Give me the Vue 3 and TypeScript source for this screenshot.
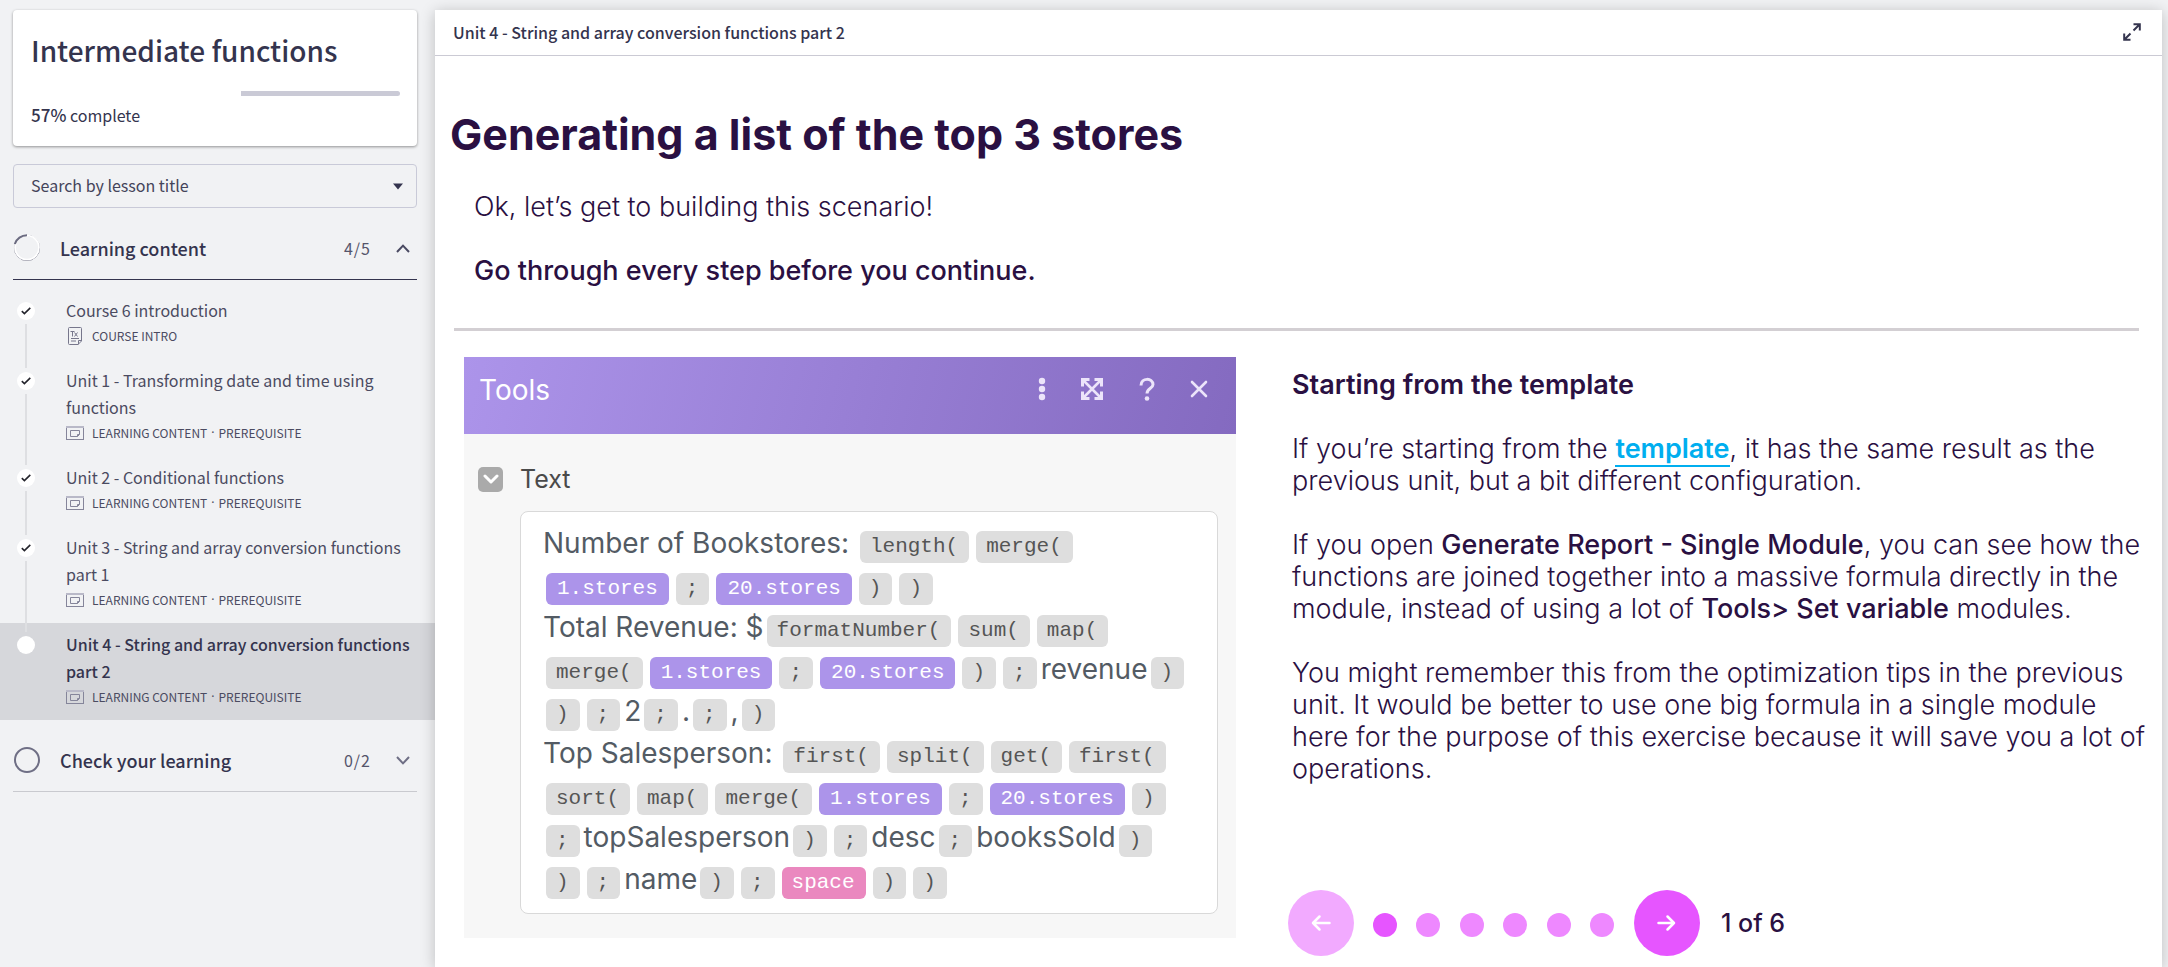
<script setup lang="ts">
import { ref } from 'vue'

interface Lesson {
  title: string
  tags: string[]
  icon: 'page' | 'window'
  done: boolean
  current?: boolean
}

type Kind = 'text' | 'fn' | 'var' | 'kw'
interface Token {
  kind: Kind
  value: string
}

const unitTags = ['LEARNING CONTENT', 'PREREQUISITE']
const lessons: Lesson[] = [
  { title: 'Course 6 introduction', tags: ['COURSE INTRO'], icon: 'page', done: true },
  { title: 'Unit 1 - Transforming date and time using functions', tags: unitTags, icon: 'window', done: true },
  { title: 'Unit 2 - Conditional functions', tags: unitTags, icon: 'window', done: true },
  { title: 'Unit 3 - String and array conversion functions part 1', tags: unitTags, icon: 'window', done: true },
  { title: 'Unit 4 - String and array conversion functions part 2', tags: unitTags, icon: 'window', done: false, current: true },
]

const t = (value: string): Token => ({ kind: 'text', value })
const f = (value: string): Token => ({ kind: 'fn', value })
const v = (value: string): Token => ({ kind: 'var', value })

const formula: Token[][] = [
  [t('Number of Bookstores: '), f('length('), f('merge(')],
  [v('1.stores'), f(';'), v('20.stores'), f(')'), f(')')],
  [t('Total Revenue: $'), f('formatNumber('), f('sum('), f('map(')],
  [f('merge('), v('1.stores'), f(';'), v('20.stores'), f(')'), f(';'), t('revenue'), f(')')],
  [f(')'), f(';'), t('2'), f(';'), t('.'), f(';'), t(','), f(')')],
  [t('Top Salesperson: '), f('first('), f('split('), f('get('), f('first(')],
  [f('sort('), f('map('), f('merge('), v('1.stores'), f(';'), v('20.stores'), f(')')],
  [f(';'), t('topSalesperson'), f(')'), f(';'), t('desc'), f(';'), t('booksSold'), f(')')],
  [f(')'), f(';'), t('name'), f(')'), f(';'), { kind: 'kw', value: 'space' }, f(')'), f(')')],
]

const steps = 6
const step = ref(1)
const percent = 57
</script>

<template>
  <div class="shell">
    <aside class="sidebar">
      <section class="card">
        <h2 class="course">Intermediate functions</h2>
        <div class="track" role="progressbar" aria-label="Course progress" :aria-valuenow="percent" aria-valuemin="0" aria-valuemax="100">
          <div class="done" :style="{ width: percent + '%' }"></div>
          <div class="rest"></div>
        </div>
        <p class="percent"><strong>{{ percent }}%</strong> complete</p>
      </section>

      <div class="search">
        <select class="select" aria-label="Search by lesson title">
          <option>Search by lesson title</option>
        </select>
        <svg class="caret" width="10" height="7" viewBox="0 0 10 7" aria-hidden="true"><path d="M0 0.5h10L5 6.5z" fill="#34344e" /></svg>
      </div>

      <button type="button" class="section open" aria-expanded="true">
        <svg class="ring" width="28" height="28" viewBox="0 0 28 28" aria-hidden="true">
          <circle cx="14" cy="14" r="12.6" fill="none" stroke="#77778a" stroke-width="1" />
          <circle cx="14" cy="13.6" r="12" fill="none" stroke="#ffffff" stroke-width="1.8" />
          <path d="M14 1.2A12.8 12.8 0 0 0 1.8 10" fill="none" stroke="#6b6b80" stroke-width="2" />
        </svg>
        <span class="section-title">Learning content</span>
        <span class="count">4/5</span>
        <svg width="14" height="9" viewBox="0 0 14 9" aria-hidden="true"><path d="M1 8l6-6.4L13 8" fill="none" stroke="#4a4a62" stroke-width="2" /></svg>
      </button>

      <ol class="lessons">
        <li v-for="lesson in lessons" :key="lesson.title" class="lesson" :class="{ current: lesson.current }">
          <span class="marker">
            <svg v-if="lesson.done" width="10" height="8" viewBox="0 0 10 8" aria-hidden="true"><path d="M0.8 4.2L3.4 6.6L9.3 0.9" fill="none" stroke="#23232b" stroke-width="1.6" /></svg>
          </span>
          <a class="lesson-link" href="#">
            <span class="lesson-title">{{ lesson.title }}</span>
            <span class="meta">
              <svg v-if="lesson.icon === 'page'" width="18" height="18" viewBox="0 0 18 18" fill="none" stroke="#77778c" aria-hidden="true">
                <path d="M3.5 0.5h11a1 1 0 0 1 1 1V14l-3.500 3.500H3.500a1 1 0 0 1-1-1v-15a1 1 0 0 1 1-1z" />
                <path d="M15.500 13.500h-3v4M5 11.500h8M5 14h5" />
                <path d="M4.500 4.500h4M6.500 4.500v5M8.500 5.500l3 4M11.500 5.500l-3 4" />
              </svg>
              <svg v-else width="18" height="16" viewBox="0 0 18 16" fill="none" stroke="#85859a" aria-hidden="true">
                <rect x="0.500" y="1.500" width="17" height="13" />
                <path d="M0 2h18" stroke="#b9b9c8" stroke-width="2" />
                <path d="M4.500 5.500h9v4l-2 2h-7zM13.500 9.500h-2v2" />
              </svg>
              <span class="tags">
                <template v-for="(tag, i) in lesson.tags" :key="tag"><span v-if="i > 0" class="sep">·</span><span>{{ tag }}</span></template>
              </span>
            </span>
          </a>
        </li>
      </ol>

      <button type="button" class="section" aria-expanded="false">
        <svg class="ring" width="28" height="28" viewBox="0 0 28 28" aria-hidden="true"><circle cx="14" cy="14" r="12" fill="none" stroke="#6f6f85" stroke-width="2" /></svg>
        <span class="section-title">Check your learning</span>
        <span class="count">0/2</span>
        <svg width="14" height="9" viewBox="0 0 14 9" aria-hidden="true"><path d="M1 1l6 6.400L13 1" fill="none" stroke="#6f6f85" stroke-width="2" /></svg>
      </button>
    </aside>

    <main class="main">
      <header class="topbar">
        <span>Unit 4 - String and array conversion functions part 2</span>
        <button type="button" class="plain" aria-label="Full screen">
          <svg width="18" height="18" viewBox="0 0 18 18" fill="none" stroke="#34344e" stroke-width="2" aria-hidden="true">
            <path d="M10.500 7.500L16 2M10.500 1.200h6.300v6.300M7.500 10.500L2 16M1.200 10.500v6.300h6.300" />
          </svg>
        </button>
      </header>

      <article class="content">
        <h1>Generating a list of the top 3 stores</h1>
        <div class="intro">
          <p>Ok, let’s get to building this scenario!</p>
          <p class="strong">Go through every step before you continue.</p>
        </div>

        <div class="columns">
          <section class="module">
            <div class="module-bar">
              <span class="module-name">Tools</span>
              <button type="button" class="plain" aria-label="More">
                <svg width="8" height="24" viewBox="0 0 8 24" fill="#ece4fa" aria-hidden="true"><circle cx="4" cy="4" r="3.200" /><circle cx="4" cy="12" r="3.200" /><circle cx="4" cy="20" r="3.200" /></svg>
              </button>
              <button type="button" class="plain" aria-label="Expand">
                <svg width="24" height="24" viewBox="0 0 24 24" fill="none" stroke="#ece4fa" stroke-width="3" aria-hidden="true">
                  <path d="M3 3l18 18M21 3L3 21" stroke-width="2.600" />
                  <path d="M2.500 9.500V2.500H9.500M14.500 2.500h7V9.500M21.500 14.500v7H14.500M9.500 21.500h-7V14.500" />
                </svg>
              </button>
              <button type="button" class="plain" aria-label="Help">
                <svg width="18" height="24" viewBox="0 0 18 24" fill="none" stroke="#ece4fa" stroke-width="3" aria-hidden="true">
                  <path d="M3 8.500C3 0.500 15 0.500 15 7.500C15 11.500 9 11 9 16.500" />
                  <circle cx="9" cy="21.500" r="2.300" fill="#ece4fa" stroke="none" />
                </svg>
              </button>
              <button type="button" class="plain" aria-label="Close">
                <svg width="18" height="18" viewBox="0 0 18 18" fill="none" stroke="#ece4fa" stroke-width="2.600" stroke-linecap="round" aria-hidden="true"><path d="M2 2l14 14M16 2L2 16" /></svg>
              </button>
            </div>
            <div class="module-body">
              <div class="field-head">
                <button type="button" class="fold" aria-label="Collapse Text">
                  <svg width="16" height="10" viewBox="0 0 16 10" fill="none" stroke="#ffffff" stroke-width="3" stroke-linecap="round" stroke-linejoin="round" aria-hidden="true"><path d="M2 2l6 6 6-6" /></svg>
                </button>
                <span>Text</span>
              </div>
              <div class="formula">
                <div v-for="(row, r) in formula" :key="r" class="row">
                  <span v-for="(token, i) in row" :key="i" :class="token.kind === 'text' ? 'words' : ['chip', token.kind]">{{ token.value }}</span>
                </div>
              </div>
            </div>
          </section>

          <section class="guide">
            <h2 class="guide-title">Starting from the template</h2>
            <p>If you’re starting from the <a class="link" href="#">template</a>, it has the same result as the previous unit, but a bit different configuration.</p>
            <p>If you open <strong>Generate Report - Single Module</strong>, you can see how the functions are joined together into a massive formula directly in the module, instead of using a lot of <strong>Tools&gt; Set variable</strong> modules.</p>
            <p>You might remember this from the optimization tips in the previous unit. It would be better to use one big formula in a single module here for the purpose of this exercise because it will save you a lot of operations.</p>

            <nav class="pager" aria-label="Steps">
              <button type="button" class="arrow" :class="{ faded: step === 1 }" aria-label="Previous step" @click="step = Math.max(1, step - 1)">
                <svg width="20" height="18" viewBox="0 0 20 18" fill="none" stroke="#ffffff" stroke-width="2.500" stroke-linecap="round" stroke-linejoin="round" aria-hidden="true"><path d="M18.500 9H2M8.500 2.500L2 9l6.500 6.500" /></svg>
              </button>
              <div class="dots">
                <button v-for="n in steps" :key="n" type="button" class="dot" :class="{ on: n === step }" :aria-label="'Step ' + n" @click="step = n"></button>
              </div>
              <button type="button" class="arrow" aria-label="Next step" @click="step = Math.min(steps, step + 1)">
                <svg width="20" height="18" viewBox="0 0 20 18" fill="none" stroke="#ffffff" stroke-width="2.500" stroke-linecap="round" stroke-linejoin="round" aria-hidden="true"><path d="M1.500 9H17M10.500 2.500L17 9l-6.500 6.500" /></svg>
              </button>
              <span class="position">{{ step }} of {{ steps }}</span>
            </nav>
          </section>
        </div>
      </article>
    </main>
  </div>
</template>

<style>
body {
  margin: 0;
  background: #f1f2f4;
}
</style>

<style scoped>
.shell {
  box-sizing: border-box;
  display: grid;
  grid-template-columns: 435px minmax(0, 1fr);
  min-height: 100vh;
  padding-right: 6px;
  background: #f1f2f4;
  color: #34344e;
  font-family: "Noto Sans CJK SC", "Noto Sans", sans-serif;
  font-size: 16px;
}
h1, h2, p, ol {
  margin: 0;
  padding: 0;
}
button {
  border: 0;
  padding: 0;
  background: none;
  color: inherit;
  font: inherit;
  cursor: pointer;
}
svg {
  display: block;
  flex: none;
}
.plain {
  display: flex;
}

.sidebar {
  padding-top: 10px;
}
.card {
  margin: 0 18px 0 13px;
  padding: 22px 17px 18px 18px;
  border-radius: 4px;
  background: #ffffff;
  box-shadow: 0 1px 3px rgba(0, 0, 0, 0.4);
}
.course {
  font-size: 28px;
  line-height: 36px;
  font-weight: 500;
}
.track {
  display: flex;
  margin-top: 23px;
  height: 5px;
}
.rest {
  flex: 1;
  border-radius: 0 3px 3px 0;
  background: #cacad6;
}
.percent {
  margin-top: 6px;
  line-height: 26px;
}
.percent strong {
  font-size: 17px;
  font-weight: 500;
}
.search {
  position: relative;
  margin: 18px 18px 0 13px;
}
.select {
  display: block;
  width: 100%;
  height: 44px;
  padding: 0 36px 2px 17px;
  border: 1px solid #c9cad8;
  border-radius: 4px;
  appearance: none;
  background: none;
  color: #44445a;
  font: inherit;
}
.caret {
  position: absolute;
  right: 14px;
  top: 19px;
  pointer-events: none;
}
.section {
  display: flex;
  align-items: center;
  width: 404px;
  height: 63px;
  margin: 9px 18px 0 13px;
  padding-right: 7px;
  border-bottom: 1px solid #c9cacf;
  text-align: left;
}
.section.open {
  border-bottom-color: #34344e;
}
.section-title {
  flex: 1;
  margin-left: 19px;
  font-size: 18px;
  font-weight: 500;
}
.count {
  margin-right: 25px;
  color: #55556b;
  letter-spacing: 1px;
}
.lessons {
  padding-top: 9px;
  list-style: none;
}
.lesson {
  position: relative;
  display: flex;
  padding: 8px 18px 11px 17px;
}
.lesson.current {
  background: #d6d7db;
}
.lesson:not(:last-child)::after {
  content: "";
  position: absolute;
  left: 25px;
  top: 35px;
  bottom: -9px;
  width: 2px;
  z-index: 1;
  background: #dedfe2;
}
.marker {
  display: flex;
  flex: none;
  align-items: center;
  justify-content: center;
  width: 18px;
  height: 18px;
  margin-top: 5px;
  border-radius: 50%;
  background: #ffffff;
}
.lesson-link {
  flex: 1;
  margin-left: 31px;
  color: #4b4b61;
  text-decoration: none;
}
.lesson-title {
  display: block;
  line-height: 27px;
}
.current .lesson-title {
  color: #34344e;
  font-weight: 500;
}
.meta {
  display: flex;
  align-items: center;
  gap: 8px;
  height: 24px;
  font-size: 12px;
  line-height: 24px;
}
.tags {
  display: flex;
  gap: 4px;
}
.sep {
  font-family: "Noto Sans", sans-serif;
}

.main {
  position: relative;
  z-index: 2;
  margin-top: 10px;
  background: #ffffff;
  box-shadow: 0 2px 14px rgba(0, 0, 0, 0.22);
}
.topbar {
  display: flex;
  align-items: center;
  justify-content: space-between;
  height: 43px;
  padding: 0 21px 2px 18px;
  border-bottom: 1px solid #cbcad4;
  font-weight: 500;
}
.content {
  padding: 53px 10px 10px 17px;
  color: #2a1042;
  font-family: Inter, "Liberation Sans", sans-serif;
  font-size: 27px;
  font-weight: 300;
  line-height: 32px;
}
h1 {
  margin-left: -2px;
  font-size: 43px;
  line-height: 50px;
  font-weight: 700;
}
.intro {
  display: grid;
  gap: 32px;
  margin: 0 13px 0 2px;
  padding: 32px 20px 41px;
  border-bottom: 3px solid #d3cfd3;
}
.strong, strong {
  font-weight: 500;
}
.columns {
  display: grid;
  grid-template-columns: 772fr 860fr;
  gap: 56px;
  align-items: start;
  margin-top: 26px;
  padding-left: 12px;
}
.module {
  background: #f7f7f7;
  font-weight: 400;
}
.module-bar {
  display: flex;
  align-items: center;
  height: 77px;
  box-sizing: border-box;
  padding: 0 28px 14px 15px;
  gap: 34px;
  background: linear-gradient(105deg, #ac94ea, #846ac0);
}
.module-name {
  flex: 1;
  padding-top: 3px;
  color: #ffffff;
  font-size: 28px;
}
.module-body {
  padding: 29px 18px 24px 14px;
}
.field-head {
  display: flex;
  align-items: center;
  gap: 17px;
  color: #4a4a4a;
  font-size: 25px;
}
.fold {
  display: flex;
  align-items: center;
  justify-content: center;
  width: 25px;
  height: 25px;
  border-radius: 5px;
  background: #aaaaaa;
}
.formula {
  margin: 16px 0 0 42px;
  padding: 14px 10px 9px 22px;
  border: 1px solid #d9d9d9;
  border-radius: 8px;
  background: #ffffff;
  color: #535b64;
}
.row {
  display: flex;
  height: 42px;
}
.words {
  font-size: 28px;
  line-height: 35px;
  white-space: pre;
}
.chip {
  height: 32px;
  margin: 5px 4px 0 3px;
  padding: 0 11px 0 10px;
  border-radius: 6px;
  background: #dedede;
  color: #555555;
  font-family: "Liberation Mono", monospace;
  font-size: 21px;
  line-height: 31px;
}
.chip.var {
  padding: 0 11px;
  background: #ac94ea;
  color: #ffffff;
}
.chip.kw {
  background: #ea88bf;
  color: #ffffff;
}
.guide {
  padding-top: 12px;
}
.guide p {
  margin-top: 32px;
}
.guide-title {
  font-size: 27px;
  font-weight: 600;
}
.link {
  border-bottom: 2px solid #00aeef;
  color: #00aeef;
  font-weight: 600;
  text-decoration: none;
}
.pager {
  display: flex;
  align-items: center;
  margin: 105px 0 0 -4px;
}
.arrow {
  display: flex;
  align-items: center;
  justify-content: center;
  width: 66px;
  height: 66px;
  border-radius: 50%;
  background: #e655ff;
}
.arrow.faded {
  background: #f2aaff;
}
.dots {
  display: flex;
  justify-content: space-between;
  width: 241px;
  margin: 4px 20px 0 19px;
}
.dot {
  width: 24px;
  height: 24px;
  border-radius: 50%;
  background: #ee88ff;
}
.dot.on {
  background: #e655ff;
}
.position {
  margin-left: 21px;
  font-size: 25px;
  font-weight: 500;
}
</style>
